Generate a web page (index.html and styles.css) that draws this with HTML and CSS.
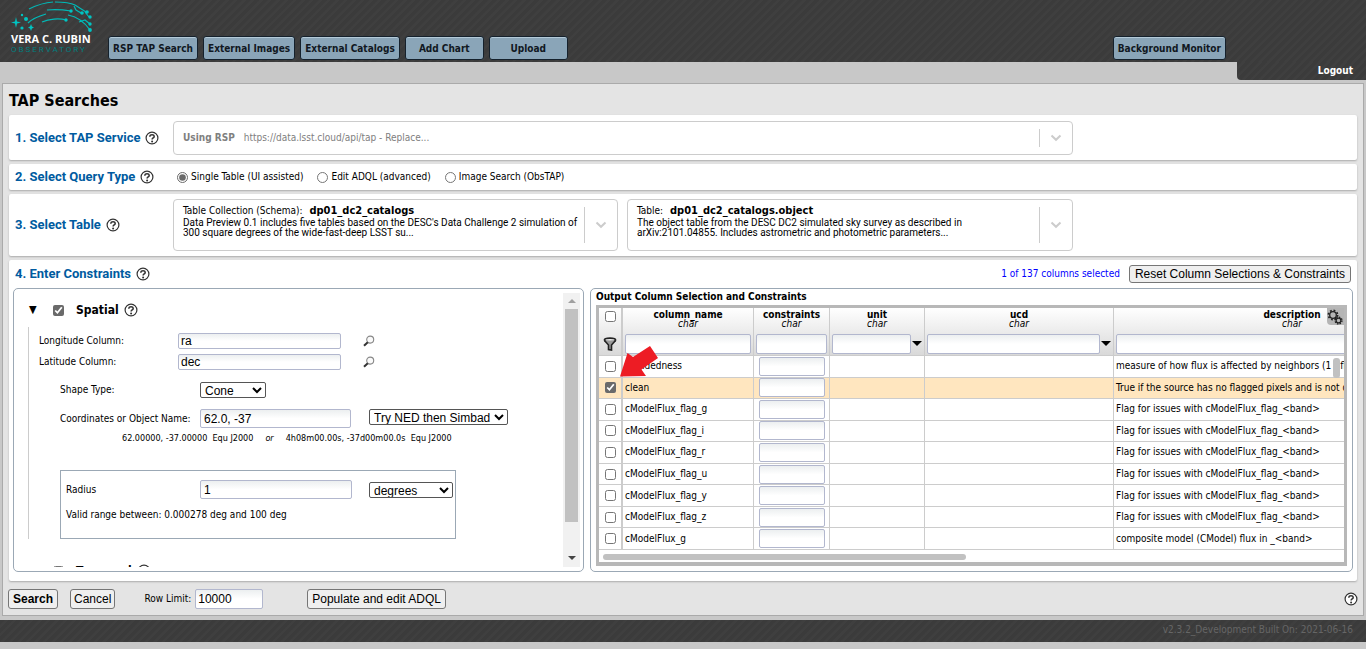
FILE: index.html
```
<!DOCTYPE html>
<html lang="en">
<head>
<meta charset="utf-8">
<title>TAP Searches</title>
<link rel="stylesheet" href="styles.css">
</head>
<body>
<svg class="defs" width="0" height="0" aria-hidden="true">
  <symbol id="help" viewBox="0 0 14 14"><circle cx="7" cy="7" r="5.9" fill="#fff" stroke="#333" stroke-width="1.2"/><path d="M4.8 5.7C4.8 2.9 9.3 3 9.2 5.6C9.1 7 7.1 7 7.1 8.6" fill="none" stroke="#333" stroke-width="1.5"/><circle cx="7.1" cy="10.5" r="1" fill="#333"/></symbol>
  <symbol id="lens" viewBox="0 0 12 12"><circle cx="7.2" cy="4.6" r="3.5" fill="#fafafa" stroke="#888" stroke-width="1.1"/><path d="M4.8 7.2L1 10.8" stroke="#333" stroke-width="2"/></symbol>
  <symbol id="chev" viewBox="0 0 12 8"><path d="M1.5 1.5L6 5.8L10.5 1.5" fill="none" stroke="#ccc" stroke-width="2"/></symbol>
</svg>

<header class="top">
  <div class="banner">
    <div class="logo">
      <svg class="arcs" viewBox="0 0 84 32" aria-hidden="true">
        <g fill="none" stroke="#00b9b7" stroke-width="1.2">
          <path d="M18 8C26 4 34 1.500 42 1M44 1C54 1 60 2 64 4L75 11"/>
          <path d="M36 9C46 8 54 9 60 10M17 22C22 17 28 15 35 13M57 14C68 16 74 22 79 29"/>
          <path d="M31 21C38 18 48 17 55 19M63 5L65 9L70 12M68 21L74 19L79 23M74 11L78 16"/>
        </g>
        <g fill="#00c4c2">
          <path d="M5 16L6 20.500L10 21.500L6 22.500L5 27L4 22.500L0 21.500L4 20.500zM20 23L21 25.500L23 26.500L21 27.500L20 30L19 27.500L17 26.500L19 25.500z"/>
          <circle cx="11" cy="14" r="1.200"/><circle cx="15" cy="18" r="2"/><circle cx="11" cy="27" r="1.600"/><circle cx="60" cy="10" r="1.700"/><circle cx="55" cy="19" r="1.700"/><circle cx="71" cy="12" r="1.800"/><circle cx="76" cy="11" r="1.800"/><circle cx="79" cy="16" r="1.700"/><circle cx="79" cy="23" r="1.700"/><circle cx="79" cy="29" r="1.900"/>
        </g>
      </svg>
      <span class="logo-name">VERA C. RUBIN</span>
      <span class="logo-sub">OBSERVATORY</span>
    </div>
    <nav class="menu">
      <button type="button">RSP TAP Search</button>
      <button type="button">External Images</button>
      <button type="button">External Catalogs</button>
      <button type="button">Add Chart</button>
      <button type="button">Upload</button>
    </nav>
    <button type="button" class="monitor">Background Monitor</button>
  </div>
  <div class="user"><a href="#">Logout</a></div>
</header>

<main class="frame">
  <h1>TAP Searches</h1>

  <section class="card service">
    <h2>1. Select TAP Service <svg class="help"><use href="#help"/></svg></h2>
    <div class="combo wide">
      <p class="combo-text grey"><b>Using RSP</b><span>https://data.lsst.cloud/api/tap - Replace...</span></p>
      <span class="arrow"><svg><use href="#chev"/></svg></span>
    </div>
  </section>

  <section class="card query">
    <h2>2. Select Query Type <svg class="help"><use href="#help"/></svg></h2>
    <div class="radios">
      <label><input type="radio" name="qt" checked>Single Table (UI assisted)</label>
      <label><input type="radio" name="qt">Edit ADQL (advanced)</label>
      <label><input type="radio" name="qt">Image Search (ObsTAP)</label>
    </div>
  </section>

  <section class="card tables">
    <h2>3. Select Table <svg class="help"><use href="#help"/></svg></h2>
    <div class="combo">
      <div class="combo-text">
        <p class="combo-title">Table Collection (Schema): <b>dp01_dc2_catalogs</b></p>
        <p class="combo-desc">Data Preview 0.1 includes five tables based on the DESC's Data Challenge 2 simulation of<br>300 square degrees of the wide-fast-deep LSST su...</p>
      </div>
      <span class="arrow"><svg><use href="#chev"/></svg></span>
    </div>
    <div class="combo">
      <div class="combo-text">
        <p class="combo-title">Table: <b>dp01_dc2_catalogs.object</b></p>
        <p class="combo-desc">The object table from the DESC DC2 simulated sky survey as described in<br>arXiv:2101.04855. Includes astrometric and photometric parameters...</p>
      </div>
      <span class="arrow"><svg><use href="#chev"/></svg></span>
    </div>
  </section>

  <section class="card constraints">
    <div class="con-head">
      <h2>4. Enter Constraints <svg class="help"><use href="#help"/></svg></h2>
      <span class="count">1 of 137 columns selected</span>
      <button type="button" class="btn">Reset Column Selections &amp; Constraints</button>
    </div>
    <div class="panels">
      <div class="panel spatial">
        <div class="scroll-body">
          <div class="group-head">
            <span class="tri">▼</span>
            <input type="checkbox" id="sp" checked><label for="sp">Spatial</label>
            <svg class="help"><use href="#help"/></svg>
          </div>
          <div class="group">
            <div class="line lonlat"><label for="lon">Longitude Column:</label><input class="text" id="lon" value="ra"><svg class="lens"><use href="#lens"/></svg></div>
            <div class="line lonlat"><label for="lat">Latitude Column:</label><input class="text" id="lat" value="dec"><svg class="lens"><use href="#lens"/></svg></div>
            <div class="line shape"><label for="shp">Shape Type:</label><select id="shp"><option>Cone</option></select></div>
            <div class="line coords"><label for="pos">Coordinates or Object Name:</label><input class="text tall" id="pos" value="62.0, -37"><select class="resolver" aria-label="Resolver"><option>Try NED then Simbad</option></select></div>
            <p class="resolved"><span>62.00000, -37.00000&nbsp; Equ J2000</span><i>or</i><span>4h08m00.00s, -37d00m00.0s&nbsp; Equ J2000</span></p>
            <div class="radius">
              <div class="line rad"><label for="rad">Radius</label><input class="text tall" id="rad" value="1"><select class="unit" aria-label="Radius unit"><option>degrees</option></select></div>
              <p>Valid range between: 0.000278 deg and 100 deg</p>
            </div>
          </div>
          <div class="group-head temporal">
            <span class="tri">▶</span>
            <input type="checkbox" id="tm"><label for="tm">Temporal</label>
            <svg class="help"><use href="#help"/></svg>
          </div>
        </div>
        <div class="vbar" aria-hidden="true"><span class="up"></span><span class="thumb"></span><span class="down"></span></div>
      </div>

      <div class="panel columns">
        <h3>Output Column Selection and Constraints</h3>
        <div class="grid">
          <table>
            <colgroup><col class="c0"><col class="c1"><col class="c2"><col class="c3"><col class="c4"><col class="c5"></colgroup>
            <thead>
              <tr class="names"><th><input type="checkbox" aria-label="Select all"></th><th>column_name<i>char</i></th><th>constraints<i>char</i></th><th>unit<i>char</i></th><th>ucd<i>char</i></th><th>description<i>char</i></th></tr>
              <tr class="filters">
                <td><svg class="funnel" viewBox="0 0 14 14"><ellipse cx="7" cy="3" rx="5.500" ry="1.800" fill="#eee" stroke="#222" stroke-width="1.800"/><path d="M1.500 3.500L5.500 8V12.500L8.500 13V8L12.500 3.500" fill="#999" stroke="#222" stroke-width="1.600"/></svg></td>
                <td><input class="text" aria-label="Filter column_name"></td>
                <td><input class="text" aria-label="Filter constraints"></td>
                <td><div class="pick"><input class="text" aria-label="Filter unit"><span></span></div></td>
                <td><div class="pick"><input class="text" aria-label="Filter ucd"><span></span></div></td>
                <td><input class="text" aria-label="Filter description"></td>
              </tr>
            </thead>
            <tbody>
              <tr><td><input type="checkbox" aria-label="blendedness"></td><td>blendedness</td><td><input class="text" aria-label="Constraint"></td><td></td><td></td><td>measure of how flux is affected by neighbors (1 - flux.child/flux.parent)</td></tr>
              <tr class="on"><td><input type="checkbox" checked aria-label="clean"></td><td>clean</td><td><input class="text" aria-label="Constraint"></td><td></td><td></td><td>True if the source has no flagged pixels and is not deblended</td></tr>
              <tr><td><input type="checkbox" aria-label="flag_g"></td><td>cModelFlux_flag_g</td><td><input class="text" aria-label="Constraint"></td><td></td><td></td><td>Flag for issues with cModelFlux_flag_&lt;band&gt;</td></tr>
              <tr><td><input type="checkbox" aria-label="flag_i"></td><td>cModelFlux_flag_i</td><td><input class="text" aria-label="Constraint"></td><td></td><td></td><td>Flag for issues with cModelFlux_flag_&lt;band&gt;</td></tr>
              <tr><td><input type="checkbox" aria-label="flag_r"></td><td>cModelFlux_flag_r</td><td><input class="text" aria-label="Constraint"></td><td></td><td></td><td>Flag for issues with cModelFlux_flag_&lt;band&gt;</td></tr>
              <tr><td><input type="checkbox" aria-label="flag_u"></td><td>cModelFlux_flag_u</td><td><input class="text" aria-label="Constraint"></td><td></td><td></td><td>Flag for issues with cModelFlux_flag_&lt;band&gt;</td></tr>
              <tr><td><input type="checkbox" aria-label="flag_y"></td><td>cModelFlux_flag_y</td><td><input class="text" aria-label="Constraint"></td><td></td><td></td><td>Flag for issues with cModelFlux_flag_&lt;band&gt;</td></tr>
              <tr><td><input type="checkbox" aria-label="flag_z"></td><td>cModelFlux_flag_z</td><td><input class="text" aria-label="Constraint"></td><td></td><td></td><td>Flag for issues with cModelFlux_flag_&lt;band&gt;</td></tr>
              <tr><td><input type="checkbox" aria-label="g"></td><td>cModelFlux_g</td><td><input class="text" aria-label="Constraint"></td><td></td><td></td><td>composite model (CModel) flux in _&lt;band&gt;</td></tr>
            </tbody>
          </table>
          <div class="hbar" aria-hidden="true"></div>
          <span class="vthumb" aria-hidden="true"></span>
          <button type="button" class="gear" aria-label="Table options"><svg viewBox="0 0 16 16"><g fill="none" stroke="#222"><circle cx="6" cy="6" r="3.300" stroke-width="1.300"/><circle cx="6" cy="6" r="4.600" stroke-width="1.700" stroke-dasharray="1.800 1.810"/><circle cx="11.500" cy="11.500" r="2.400" fill="#b5b5b5" stroke-width="1.300"/><circle cx="11.500" cy="11.500" r="3.500" stroke-width="1.300" stroke-dasharray="1.500 1.250"/></g></svg></button>
          <svg class="pointer" viewBox="0 0 38 31" aria-hidden="true"><path d="M0 30.500L7.500 7L13 11L30 0L38 12L21.500 23.500L26 30Z" fill="#ed1c24"/></svg>
        </div>
      </div>
    </div>
  </section>

  <div class="actions">
    <button type="button" class="btn strong">Search</button>
    <button type="button" class="btn cancel">Cancel</button>
    <label for="lim">Row Limit:</label><input class="text tall" id="lim" value="10000">
    <button type="button" class="btn populate">Populate and edit ADQL</button>
    <svg class="help"><use href="#help"/></svg>
  </div>
</main>
<footer>v2.3.2_Development Built On: 2021-06-16</footer>
</body>
</html>
```
FILE: styles.css
```
* { box-sizing: border-box; }
body { margin: 0; background: #c8c8c8; color: #000; font: 10px/12px "DejaVu Sans Condensed", "DejaVu Sans", sans-serif; }
h1, h2, h3, p { margin: 0; }
input, select, button { margin: 0; }
input[type="checkbox"], input[type="radio"] { width: 11px; height: 11px; accent-color: #6a6a6a; flex: none; }
.defs { position: absolute; }
.help { width: 14px; height: 14px; flex: none; }

.banner, .user, footer { background: repeating-linear-gradient(135deg, #3b3b3b 0, #3b3b3b 3px, #3f3f3f 4px, #3f3f3f 6px); }
.banner { display: flex; align-items: flex-end; height: 62px; padding: 0 140px 2px 11px; }
.logo { display: flex; flex-direction: column; width: 97px; align-self: flex-start; padding-top: 1px; white-space: nowrap; }
.arcs { width: 84px; height: 32px; }
.logo-name { color: #fff; font: bold 11px/12px "Open Sans", sans-serif; }
.logo-sub { color: #007f80; font: 8px/10px Roboto, sans-serif; letter-spacing: 2px; }
.menu { display: flex; gap: 5px; flex: 1; }
.banner button { height: 24px; min-width: 79px; padding: 1px 4px 0; border: 1px solid #15212c; border-radius: 3px; background: #8aa5b8; box-shadow: inset 0 1px #b4cad8; color: #111822; font: bold 10px/12px "DejaVu Sans Condensed", "DejaVu Sans", sans-serif; white-space: nowrap; }
.user { width: 129px; height: 18px; margin-left: auto; padding: 3px 13px; border-bottom-left-radius: 4px; text-align: right; }
.user a { color: #fff; font-weight: bold; text-decoration: none; }

.frame { margin: 3px 2px 4px; padding: 4px 5px 6px; border: 1px solid #aaa; background: #e4e4e4; }
h1 { padding: 3px 1px 4px; font-size: 16px; line-height: 20px; }
h2 { display: flex; align-items: center; gap: 5px; color: #005ba0; font: bold 13px/16px Roboto, sans-serif; white-space: nowrap; }
.card { margin: 0 1px 4px; padding: 5px 6px; background: #fff; border-radius: 2px; box-shadow: 0 1px 2px #aaa; }
.service, .query, .tables { display: grid; grid-template-columns: 149px 445px 446px; column-gap: 9px; align-items: center; }
.service { padding-top: 6px; }
.query .radios { grid-column: 2 / 4; padding-left: 4px; }
.wide { grid-column: 2 / 4; min-height: 34px; }
.combo { display: flex; border: 1px solid #ccc; border-radius: 4px; min-width: 0; }
.combo-text { flex: 1; padding: 4px 8px 0 9px; min-width: 0; white-space: nowrap; }
.grey { display: flex; gap: 9px; align-items: center; padding-bottom: 4px; color: #808080; }
.combo-title { line-height: 14px; }
.combo-title b { margin-left: 4px; font-size: 11px; }
.combo-desc { padding-bottom: 12px; font: 10px/10px Roboto, sans-serif; }
.arrow { display: flex; align-items: center; justify-content: center; width: 33px; margin: 7px 0; border-left: 1px solid #ccc; }
.arrow svg { width: 12px; height: 8px; }
.radios { display: flex; gap: 14px; }
.radios label { display: flex; align-items: center; gap: 3px; }

.constraints { padding: 4px 4px 9px; margin-bottom: 8px; }
.con-head { display: flex; align-items: center; padding: 1px 2px 5px; }
.con-head h2 { flex: 1; }
.count { color: #00f; margin-right: 9px; }
.btn { height: 18px; padding: 0 5px; border: 1px solid #767676; border-radius: 3px; background: #efefef; color: #000; font: 12px/14px "Liberation Sans", Arial, sans-serif; white-space: nowrap; }
.panels { display: grid; grid-template-columns: 571px 1fr; gap: 6px; }
.panel { min-width: 0; height: 284px; border: 1px solid #9ba8b5; border-radius: 5px; }
.spatial { display: flex; padding: 4px 3px 4px 14px; }
.scroll-body { flex: 1; overflow: hidden; }
.group-head { display: flex; align-items: center; padding: 10px 0; font-size: 12px; font-weight: bold; line-height: 14px; }
.tri { width: 25px; padding-left: 1px; font-size: 11px; }
.group-head label { margin: 0 5px 0 12px; }
.group { margin-bottom: 19px; padding: 3px 0 0 10px; border-left: 1px solid #ccc; }
.temporal { padding-top: 6px; }
.line { display: grid; align-items: center; }
.lonlat { grid-template-columns: 139px 163px 12px; height: 21px; }
.lonlat .lens { margin-left: 22px; }
.lens { width: 12px; height: 12px; }
.text { height: 16px; min-width: 0; width: 100%; padding: 0 2px; border: 1px solid #b2b7ce; border-radius: 2px; background: linear-gradient(#eceff0, #fff 50%); color: #000; font: 12px/14px "Liberation Sans", Arial, sans-serif; }
.text.tall { height: 19px; padding: 0 3px; }
select { height: 16px; padding: 0; border: 1px solid #555; border-radius: 2px; background-color: #fff; color: #000; font: 12px/14px "Liberation Sans", Arial, sans-serif; }
.shape, .coords { margin-left: 21px; grid-template-columns: 140px 151px auto; justify-content: start; }
.shape { padding: 10px 0 7px; }
.shape select { width: 66px; }
.coords { padding-top: 4px; }
.resolver { width: 139px; margin: 0 0 3px 18px; }
.unit { width: 84px; margin-left: 17px; }
.resolved { display: flex; gap: 12px; margin: 4px 0 26px 83px; font-size: 9px; }
.radius { width: 396px; margin-left: 21px; padding: 9px 2px 17px 5px; border: 1px solid #9ba8b5; }
.rad { grid-template-columns: 134px 152px auto; justify-content: start; }
.radius p { padding-top: 10px; }
.vbar { display: flex; flex-direction: column; align-items: center; width: 17px; background: #f1f1f1; }
.up, .down { border: 4px solid transparent; }
.up { margin: 2px 0 6px; border-bottom-color: #a0a0a0; }
.down { margin: auto 0 3px; border-top-color: #444; }
.thumb { width: 13px; height: 213px; background: #c1c1c1; }

.columns { padding: 1px 5px 5px 5px; display: flex; flex-direction: column; }
h3 { padding: 1px 0 2px; font-size: 10px; line-height: 12px; }
.grid { position: relative; flex: 1; border: 3px solid #b8b8b8; border-bottom-width: 4px; overflow: hidden; }
table { width: 872px; height: 242px; table-layout: fixed; border-collapse: separate; border-spacing: 0; }
.c0 { width: 24px; } .c1 { width: 131px; } .c2 { width: 76px; } .c3 { width: 95px; } .c4 { width: 189px; } .c5 { width: 357px; }
th, td { padding: 0 2px; border-right: 1px solid #ccc; white-space: nowrap; overflow: hidden; }
tbody td { border-bottom: 1px solid #ccc; vertical-align: middle; }
th:first-child, td:first-child { padding: 0 0 0 6px; border-right-width: 2px; text-align: left; }
th input, td input { display: block; }
thead { background: linear-gradient(#fff, #d8d8d8); }
.names th { height: 24px; line-height: 9px; vertical-align: top; padding-top: 2px; }
.names th:first-child { padding-top: 3px; }
th i { display: block; font-weight: normal; }
.filters td { height: 24px; border-bottom: 1px solid #ccc; padding: 0 2px; }
.filters td:first-child { padding-left: 4px; }
.filters .text { height: 20px; }
.funnel { display: block; width: 14px; height: 14px; }
.pick { display: flex; align-items: center; gap: 1px; margin-right: -2px; }
.pick .text { flex: 1; }
.pick span { flex: none; border: 5px solid transparent; border-top-color: #000; border-bottom: 0; margin-right: 2px; }
tbody .text { width: 66px; height: 19px; margin-left: 3px; }
.on { background: #ffe6bf; }
.hbar { width: 363px; height: 6px; margin: 4px; border-radius: 3px; background: #c1c1c1; }
.vthumb { position: absolute; right: 4px; top: 50px; width: 7px; height: 20px; border-radius: 3px; background: #c1c1c1; }
.gear { position: absolute; right: 0; top: 0; width: 17px; height: 17px; padding: 0; border: 0; border-radius: 0 0 0 4px; background: #b5b5b5; }
.gear svg { display: block; width: 16px; height: 16px; }
.pointer { position: absolute; left: 21px; top: 38px; width: 38px; height: 31px; }

.actions { display: flex; align-items: center; }
.actions .btn { height: 20px; margin-right: 12px; padding: 0 4px; }
.actions .strong { font-weight: bold; }
.actions .cancel { margin-right: 29px; padding: 0 3px; }
.actions .text { width: 68px; height: 20px; margin: 0 44px 0 4px; padding: 0 2px; }
.actions .help { margin-left: auto; }
footer { height: 22px; padding: 4px 13px; color: #666; text-align: right; }
```
